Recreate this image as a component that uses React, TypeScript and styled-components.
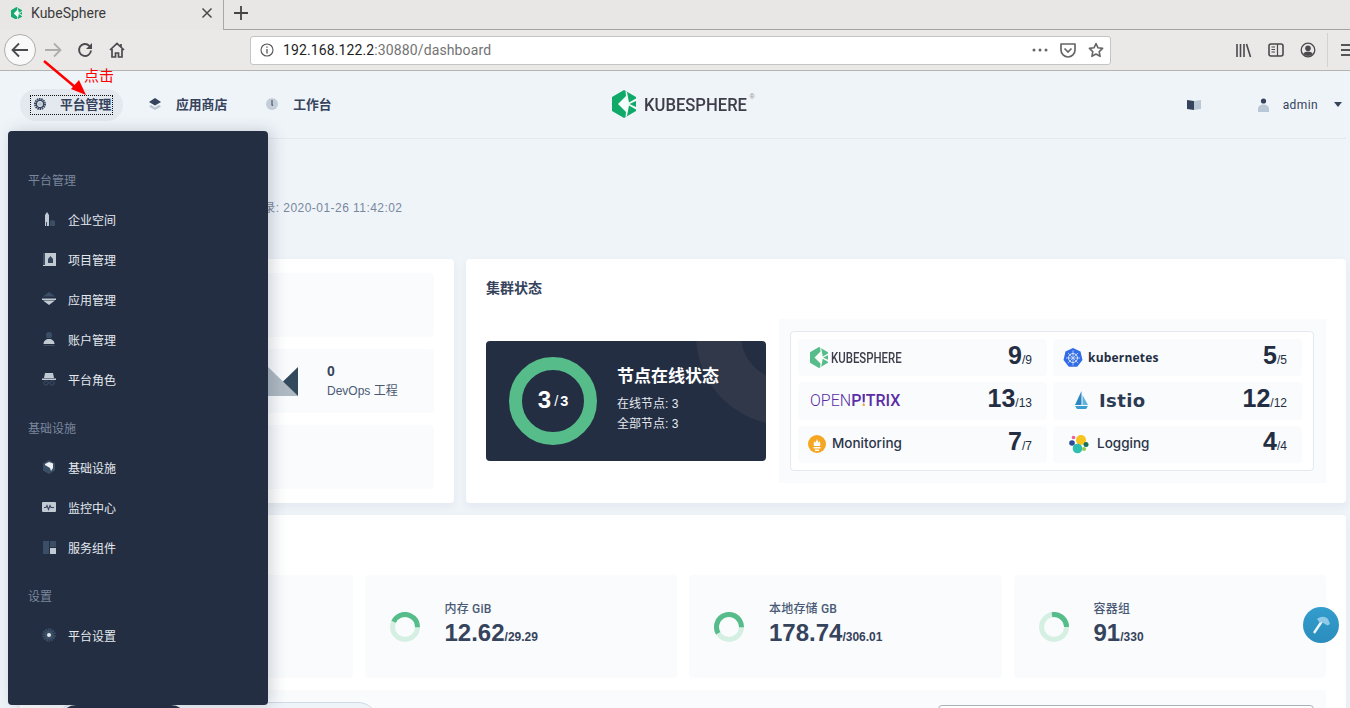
import styled, { createGlobalStyle } from 'styled-components';
import type { ReactNode } from 'react';

const SANS = '"Liberation Sans", "Noto Sans CJK SC", sans-serif';
const ROBOTO = 'Roboto, "Noto Sans CJK SC", sans-serif';

const GlobalStyle = createGlobalStyle`
    html, body {
        margin: 0;
        height: 708px;
        overflow: hidden;
        background: #eff4f9;
        font-family: ${SANS};
    }
`;

const Screen = styled.div`
    position: relative;
    width: 1350px;
    height: 708px;
    overflow: hidden;
    display: flex;
    flex-direction: column;
`;

/* browser chrome */
const TabBar = styled.div`
    height: 30px;
    flex: none;
    display: flex;
    background: #e8e7e5;
`;
const Tab = styled.div`
    width: 224px;
    display: flex;
    align-items: center;
    padding: 0 10px 4px 11px;
    box-sizing: border-box;
    border-right: 1px solid #a9a9a7;
    font: 14px ${ROBOTO};
    color: #3c3c3c;
    svg:first-child { margin-right: 9px; }
    span { flex: 1; }
`;
const TabRest = styled.div`
    flex: 1;
    display: flex;
    align-items: center;
    padding: 0 0 4px 9px;
    border-bottom: 1px solid #a2a2a0;
`;
const Toolbar = styled.div`
    height: 41px;
    flex: none;
    box-sizing: border-box;
    display: flex;
    align-items: center;
    background: #eae9e7;
    border-bottom: 1px solid #b4b4b2;
    & > * { flex: none; }
`;
const BackButton = styled.div`
    width: 32px;
    height: 32px;
    margin-left: 4px;
    box-sizing: border-box;
    border: 1px solid #adadab;
    border-radius: 50%;
    background: #f9f9f9;
    display: flex;
    align-items: center;
    justify-content: center;
`;
const NavIcons = styled.div`
    display: flex;
    align-items: center;
    gap: 16px;
    margin-left: 8px;
    width: 206px;
    svg:first-child { margin-right: -1px; }
`;
const UrlBar = styled.div`
    width: 861px;
    height: 29px;
    box-sizing: border-box;
    display: flex;
    align-items: center;
    gap: 9px;
    padding: 0 6px 0 9px;
    background: #fff;
    border: 1px solid #c4c4c2;
    border-radius: 3px;
    font: 14px ${ROBOTO};
    letter-spacing: 0.12px;
    color: #737373;
    b { font-weight: 400; color: #1f1f1f; }
`;
const UrlText = styled.div`
    flex: 1;
`;
const UrlIcons = styled.div`
    display: flex;
    align-items: center;
    gap: 12px;
`;
const ToolIcons = styled.div`
    display: flex;
    align-items: center;
    gap: 16px;
    margin-left: 125px;
`;
const ToolDivider = styled.div`
    width: 1px;
    height: 34px;
    margin-left: 11px;
    background: #d2d2d0;
`;
const Hamburger = styled.div`
    margin-left: 13px;
    display: flex;
    flex-direction: column;
    gap: 3px;
    i { display: block; width: 12px; height: 2px; background: #555; }
`;

/* page */
const Page = styled.div`
    flex: 1;
    min-height: 0;
    overflow: hidden;
    padding: 0 4px 0 20px;
    background: #eff4f9;
`;
const Header = styled.header`
    height: 68px;
    box-sizing: border-box;
    display: grid;
    grid-template-columns: 1fr auto 1fr;
    align-items: center;
    border-bottom: 1px solid #e3e9ef;
`;
const HeaderNav = styled.nav`
    display: flex;
    align-items: center;
    gap: 25px;
`;
const NavItem = styled.div<{ $active?: boolean; $offset?: number }>`
    height: 32px;
    box-sizing: border-box;
    display: flex;
    align-items: center;
    gap: 14px;
    margin-left: ${(p) => p.$offset ?? 0}px;
    padding-bottom: 2px;
    font: 700 12.8px ${SANS};
    color: #36435c;
    ${(p) => p.$active && `
        width: 103px;
        padding: 0 0 0 10px;
        border-radius: 16px;
        background: #e3e9ef;
    `}
`;
const FocusRing = styled.div`
    height: 20px;
    width: 83px;
    box-sizing: border-box;
    display: flex;
    align-items: center;
    gap: 13px;
    padding: 0 0 2px 2px;
    border: 1px dotted #111;
`;
const Logo = styled.div`
    display: flex;
    align-items: center;
    gap: 8px;
    margin-left: 1px;
`;
const LogoText = styled.span`
    font: 500 19px ${ROBOTO};
    color: #3e3d49;
    display: inline-block;
    width: 104px;
    white-space: nowrap;
    transform: scaleX(0.875);
    transform-origin: left center;
`;
const LogoMark = styled.sup`
    font: 7px ${SANS};
    color: #8c8c8c;
    align-self: flex-start;
    margin: 3px 0 0 -7px;
`;
const UserArea = styled.div`
    display: flex;
    justify-content: flex-end;
    align-items: center;
    padding-right: 4px;
`;
const BookIcon = styled.svg`
    margin-right: 57px;
`;
const UserName = styled.span`
    font: 12px ${ROBOTO};
    letter-spacing: 0.4px;
    color: #36435c;
    margin: 0 16px 0 14px;
`;
const Caret = styled.i`
    width: 0;
    height: 0;
    border: 4px solid transparent;
    border-top: 5px solid #36435c;
    border-bottom: 0;
`;
const Welcome = styled.div`
    height: 120px;
    box-sizing: border-box;
    padding: 62px 0 0 206px;
    font-size: 12px;
    line-height: 14px;
    letter-spacing: 0.45px;
    color: #79879c;
`;
const TopGrid = styled.div`
    display: grid;
    grid-template-columns: 434px 880px;
    gap: 12px;
`;
const Card = styled.section`
    background: #fff;
    border-radius: 4px;
    box-shadow: 0 4px 8px rgba(36, 46, 66, 0.06);
`;
const LeftCard = styled(Card)`
    height: 244px;
    box-sizing: border-box;
    padding: 14px 20px;
    display: flex;
    flex-direction: column;
    gap: 12px;
`;
const ResourceTile = styled.div`
    flex: 1;
    border-radius: 4px;
    background: #f9fbfd;
    display: flex;
    align-items: center;
    gap: 29px;
    padding-left: 198px;
`;
const ResourceCount = styled.div`
    font: 700 14px/20px ${SANS};
    color: #36435c;
`;
const ResourceLabel = styled.div`
    font: 12px/20px ${SANS};
    color: #4a5974;
`;
const RightCard = styled(Card)`
    height: 244px;
    box-sizing: border-box;
    padding: 20px;
`;
const CardTitle = styled.h3`
    margin: 0 0 22px;
    font: 700 14px/18px ${SANS};
    color: #36435c;
`;
const ClusterBody = styled.div`
    display: flex;
    align-items: center;
    gap: 13px;
`;
const NodeCard = styled.div`
    position: relative;
    overflow: hidden;
    width: 280px;
    height: 120px;
    flex: none;
    box-sizing: border-box;
    padding-left: 23px;
    display: flex;
    align-items: center;
    gap: 20px;
    border-radius: 4px;
    background: #242e42;
    color: #fff;
    &::before {
        content: '';
        position: absolute;
        right: -110px;
        top: -96px;
        width: 180px;
        height: 180px;
        box-sizing: border-box;
        border: 45px solid #303849;
        border-radius: 50%;
    }
`;
const Donut = styled.div`
    position: relative;
    z-index: 1;
    width: 88px;
    height: 88px;
    box-sizing: border-box;
    padding-bottom: 3px;
    border: 13px solid #55bc8a;
    border-radius: 50%;
    display: flex;
    align-items: center;
    justify-content: center;
    font: 700 24px ${SANS};
    small { font: 700 14.5px ${SANS}; margin: 2px 0 0 3px; }
    small i { font-weight: 400; font-style: normal; margin-right: 2px; }
`;
const NodeInfo = styled.div`
    position: relative;
    z-index: 1;
    margin-top: -3px;
    font: 12px/20px ${SANS};
    color: #e3e9ef;
    h4 {
        margin: 0 0 5px;
        font: 700 17px/24px ${SANS};
        color: #fff;
    }
`;
const SystemBlock = styled.div`
    flex: 1;
    height: 164px;
    box-sizing: border-box;
    padding: 12px 12px 12px 11px;
    background: #f9fbfd;
`;
const SystemBox = styled.div`
    height: 140px;
    box-sizing: border-box;
    padding: 7px 11px 7px 7px;
    display: grid;
    grid-template-columns: 249px 249px;
    grid-template-rows: repeat(3, 1fr);
    gap: 6px;
    background: #fff;
    border: 1px solid #e3e9ef;
    border-radius: 4px;
`;
const SystemTile = styled.div`
    display: flex;
    align-items: center;
    justify-content: space-between;
    padding: 0 15px 0 10px;
    background: #f9fbfd;
    border-radius: 4px;
`;
const SystemName = styled.div<{ $pad?: number }>`
    display: flex;
    align-items: center;
    padding-left: ${(p) => p.$pad ?? 0}px;
`;
const Count = styled.div`
    margin-top: -6px;
    font: 700 25px/30px ${SANS};
    color: #242e42;
    small { font: 12px ${SANS}; }
`;
const KsWord = styled.span`
    margin-left: 3px;
    font: 500 14px ${ROBOTO};
    color: #3e3d49;
    display: inline-block;
    width: 71px;
    white-space: nowrap;
    transform: scaleX(0.815);
    transform-origin: left center;
`;
const PitrixWord = styled.span`
    font: 300 16px ${ROBOTO};
    color: #5b2ea6;
    b { font-weight: 500; }
    em {
        font-style: normal;
        font-weight: 700;
        color: transparent;
        background: linear-gradient(#5b2ea6 68%, #f5a623 68%);
        -webkit-background-clip: text;
        background-clip: text;
    }
`;
const K8sWord = styled.span`
    margin-left: 5px;
    font: 700 12px "Open Sans", ${ROBOTO};
    letter-spacing: 0.2px;
    color: #242e42;
`;
const IstioWord = styled.span`
    margin-left: 11px;
    font: 700 18px "DejaVu Sans", sans-serif;
    letter-spacing: 0.4px;
    color: #2c3a52;
`;
const PlainWord = styled.span<{ $gap?: number }>`
    margin-left: ${(p) => p.$gap ?? 6}px;
    padding-bottom: 2px;
    font: 500 13.5px Inter, ${ROBOTO};
    color: #2b3548;
`;
const UsageCard = styled(Card)`
    margin-top: 12px;
    height: 400px;
    box-sizing: border-box;
    padding: 60px 20px 20px;
`;
const UsageGrid = styled.div`
    display: grid;
    grid-template-columns: repeat(4, 1fr);
    gap: 12px;
`;
const UsageTile = styled.div`
    height: 103px;
    box-sizing: border-box;
    display: flex;
    align-items: center;
    gap: 25px;
    padding-left: 25px;
    border-radius: 4px;
    background: #f9fbfd;
`;
const UsageText = styled.div`
    margin-bottom: 5px;
`;
const UsageLabel = styled.div`
    font: 500 12px/16px ${ROBOTO};
    letter-spacing: 0.2px;
    color: #4a5974;
    margin-bottom: 2px;
`;
const UsageValue = styled.div`
    font: 700 24px/28px ${SANS};
    color: #36435c;
    small { font: 700 12px ${SANS}; }
`;
const ChartSection = styled.div`
    margin-top: 12px;
    height: 100px;
    padding: 12px 12px 0 17px;
    display: flex;
    justify-content: space-between;
    align-items: flex-start;
    background: #f9fbfd;
`;
const RangePill = styled.div`
    width: 321px;
    height: 40px;
    box-sizing: border-box;
    padding: 2px;
    background: #eff4f9;
    border: 1px solid #d1d9e3;
    border-radius: 20px;
`;
const RangeActive = styled.div`
    width: 127px;
    height: 32px;
    border-radius: 16px;
    background: #242e42;
`;
const SearchBox = styled.div`
    width: 376px;
    height: 32px;
    margin-top: 3px;
    box-sizing: border-box;
    background: #fff;
    border: 1px solid #a9b0ba;
    border-radius: 4px;
`;

/* overlays */
const SideMenu = styled.aside`
    position: absolute;
    left: 8px;
    top: 131px;
    width: 260px;
    height: 574px;
    box-sizing: border-box;
    padding: 39px 0 0 20px;
    border-radius: 4px;
    background: #242e42;
    box-shadow: 4px 0 16px rgba(36, 46, 66, 0.2);
`;
const MenuGroup = styled.div`
    margin-bottom: 18px;
`;
const MenuTitle = styled.div`
    font: 12px/22px ${SANS};
    color: #79879c;
    margin-bottom: 8px;
`;
const MenuItem = styled.div`
    height: 40px;
    box-sizing: border-box;
    display: flex;
    align-items: center;
    gap: 11px;
    padding: 0 0 2px 13px;
    font: 12px ${SANS};
    color: #e3e9ef;
`;
const Annotation = styled.svg`
    position: absolute;
    left: 0;
    top: 0;
    pointer-events: none;
`;
const ClickNote = styled.div`
    position: absolute;
    left: 84px;
    top: 67px;
    font: 15px/18px ${SANS};
    color: #f00;
`;
const HammerButton = styled.div`
    position: absolute;
    left: 1303px;
    top: 607px;
    width: 36px;
    height: 36px;
    border-radius: 50%;
    background: linear-gradient(180deg, #329dce 0%, #2b8dbd 100%);
    display: flex;
    align-items: center;
    justify-content: center;
`;

const L = '#c1c9d3';
const D = '#3a4f66';

const menuIcons: Record<string, ReactNode> = {
    building: <><path d="M4 15V4l2-3 2 3v11z" fill={L} /><path d="M6 15h-.8v-4H6z" fill="#242e42" /><path d="M9 15v-5l2.500-1L14 10v5z" fill={D} /></>,
    project: <><path d="M2 2h3v12H2z" fill={D} /><path d="M4 2h11v13H2v-1h2z" fill={L} /><path d="M7 12V8l2.500-3L12 8v4z" fill="#36435c" /></>,
    app: <><path d="M8 1l6 4.500H2z" fill={D} /><path d="M1 7.500h14V9H1z" fill={L} /><path d="M2 9.500h12L8 14z" fill={L} /></>,
    user: <><circle cx="8" cy="4" r="3" fill={D} /><path d="M8 2c1.500 0 2.500 1 2.500 3v2h-5V5C5.500 3 6.500 2 8 2z" fill={D} /><path d="M2.500 13c0-3 2.500-5 5.500-5s5.500 2 5.500 5z" fill={L} /><path d="M2.500 14h11v1h-11z" fill={D} /></>,
    role: <><path d="M4 2h8l1 5H3z" fill={L} /><path d="M1 7.500h14V9H1z" fill={L} /><circle cx="5" cy="12" r="2.200" fill="none" stroke={D} strokeWidth="1" /><circle cx="11" cy="12" r="2.200" fill="none" stroke={D} strokeWidth="1" /></>,
    infra: <><path d="M8 1l6 3.500v7L8 15l-6-3.500v-7z" fill={D} /><path d="M4 5l4-2 4 1.500V9l-2 3-1-3-5-3z" fill="#eef1f4" /></>,
    monitor: <><rect x="1" y="3" width="14" height="10" rx="1" fill={L} /><path d="M3 8.500h2l1-2 1.500 4L9 6.500l1 2h3" fill="none" stroke="#36435c" strokeWidth="1.100" /></>,
    service: <><path d="M2 2h6v13H2z" fill={D} /><path d="M9 2h6v6H9z" fill={D} /><path d="M9 9h6v6H9z" fill={L} /></>,
    settings: <><circle cx="8" cy="8" r="5.500" fill="none" stroke={D} strokeWidth="2.500" strokeDasharray="1.600 0.800" /><circle cx="8" cy="8" r="4.500" fill={D} /><circle cx="8" cy="8" r="2" fill="#e3e9ef" /></>,
};

const menu = [
    { title: '平台管理', items: [['building', '企业空间'], ['project', '项目管理'], ['app', '应用管理'], ['user', '账户管理'], ['role', '平台角色']] },
    { title: '基础设施', items: [['infra', '基础设施'], ['monitor', '监控中心'], ['service', '服务组件']] },
    { title: '设置', items: [['settings', '平台设置']] },
];

const usage = [
    { label: 'CPU 核', value: 6.51, total: '24' },
    { label: '内存 GiB', value: 12.62, total: '29.29' },
    { label: '本地存储 GB', value: 178.74, total: '306.01' },
    { label: '容器组', value: 91, total: '330' },
];

const KsHex = ({ size, color }: { size: number; color: string }) => (
    <svg width={size} height={size * 1.17} viewBox="0 0 24 28">
        <path d="M12 0l12 7v14l-12 7-12-7V7z" fill={color} />
        <path d="M24 8.500L17 12.500 15 2l-1.500-1L14 6 6 14l8 8-.5 5 1.500-1 2-10.500 7 4V17l-6.500-3L24 11z" fill="#fff" opacity="0.96" />
    </svg>
);

const UsageRing = ({ ratio }: { ratio: number }) => {
    const r = 12.5;
    const len = 2 * Math.PI * r;
    // the arc always ends at three o'clock
    const start = -ratio * 360;
    return (
        <svg width="30" height="30" viewBox="0 0 30 30" style={{ flex: 'none' }}>
            <circle cx="15" cy="15" r={r} fill="none" stroke="#d5f0e3" strokeWidth="5" />
            <circle
                cx="15"
                cy="15"
                r={r}
                fill="none"
                stroke="#55bc8a"
                strokeWidth="5"
                strokeDasharray={`${ratio * len} ${len}`}
                transform={`rotate(${start} 15 15)`}
            />
        </svg>
    );
};

const App = () => {
    return (
        <Screen>
            <GlobalStyle />
            <TabBar>
                <Tab>
                    <KsHex size={11} color="#16a970" />
                    <span>KubeSphere</span>
                    <svg width="12" height="12" viewBox="0 0 12 12">
                        <path d="M1.500 1.500l9 9M10.500 1.500l-9 9" stroke="#4a4a4a" strokeWidth="1.500" />
                    </svg>
                </Tab>
                <TabRest>
                    <svg width="16" height="16" viewBox="0 0 16 16">
                        <path d="M8 1v14M1 8h14" stroke="#444" strokeWidth="1.800" />
                    </svg>
                </TabRest>
            </TabBar>
            <Toolbar>
                <BackButton>
                    <svg width="18" height="16" viewBox="0 0 18 16">
                        <path d="M8 1.500L1.500 8 8 14.500M2 8h15" fill="none" stroke="#4a4a4f" strokeWidth="1.800" />
                    </svg>
                </BackButton>
                <NavIcons>
                    <svg width="18" height="16" viewBox="0 0 18 16">
                        <path d="M10 1.500L16.500 8 10 14.500M16 8H1" fill="none" stroke="#adadab" strokeWidth="1.800" />
                    </svg>
                    <svg width="16" height="16" viewBox="0 0 16 16">
                        <path d="M14 8.500a6 6 0 1 1-1.700-4.700L14.500 6" fill="none" stroke="#4a4a4f" strokeWidth="1.900" />
                        <path d="M15 1v6H9z" fill="#4a4a4f" />
                    </svg>
                    <svg width="16" height="16" viewBox="0 0 16 16">
                        <path d="M1 8l7-6.500L15 8M3 7v8h3.500v-4h3v4H13V7M12 2v3" fill="none" stroke="#4a4a4f" strokeWidth="1.700" />
                    </svg>
                </NavIcons>
                <UrlBar>
                    <svg width="14" height="14" viewBox="0 0 14 14">
                        <circle cx="7" cy="7" r="6" fill="none" stroke="#555" strokeWidth="1.100" />
                        <path d="M7 6v4.500M7 3.500v1.300" stroke="#555" strokeWidth="1.300" />
                    </svg>
                    <UrlText><b>192.168.122.2</b>:30880/dashboard</UrlText>
                    <UrlIcons>
                        <svg width="16" height="4" viewBox="0 0 16 4">
                            <circle cx="2" cy="2" r="1.500" fill="#666" />
                            <circle cx="8" cy="2" r="1.500" fill="#666" />
                            <circle cx="14" cy="2" r="1.500" fill="#666" />
                        </svg>
                        <svg width="16" height="15" viewBox="0 0 16 15">
                            <path d="M1 1h14v6a7 7 0 0 1-14 0z" fill="none" stroke="#666" strokeWidth="1.700" strokeLinejoin="round" />
                            <path d="M4.500 5.500L8 9l3.500-3.500" fill="none" stroke="#666" strokeWidth="1.700" />
                        </svg>
                        <svg width="16" height="16" viewBox="0 0 16 16">
                            <path d="M8 1.500l2 4.300 4.600.6-3.400 3.200.9 4.700L8 12l-4.100 2.300.9-4.700L1.400 6.400 6 5.800z" fill="none" stroke="#666" strokeWidth="1.600" strokeLinejoin="round" />
                        </svg>
                    </UrlIcons>
                </UrlBar>
                <ToolIcons>
                    <svg width="16" height="15" viewBox="0 0 16 15">
                        <path d="M1 1v13M4.500 1v13M8 1v13M10.500 1l4 13" stroke="#4a4a4f" strokeWidth="1.600" />
                    </svg>
                    <svg width="16" height="14" viewBox="0 0 16 14">
                        <rect x="1" y="1" width="14" height="12" rx="2" fill="none" stroke="#4a4a4f" strokeWidth="1.600" />
                        <path d="M9.500 1v12M3.500 4h3.500M3.500 6.500h3.500M3.500 9h3.500" stroke="#4a4a4f" strokeWidth="1.200" />
                    </svg>
                    <svg width="16" height="16" viewBox="0 0 16 16">
                        <circle cx="8" cy="8" r="6.800" fill="none" stroke="#4a4a4f" strokeWidth="1.300" />
                        <circle cx="8" cy="6.200" r="2.800" fill="#4a4a4f" />
                        <path d="M3.200 12c1-2 3-2.600 4.800-2.600s3.800.6 4.800 2.600A6.800 6.800 0 0 1 3.200 12z" fill="#4a4a4f" />
                    </svg>
                </ToolIcons>
                <ToolDivider />
                <Hamburger><i /><i /><i /></Hamburger>
            </Toolbar>
            <Page>
                <Header>
                    <HeaderNav>
                        <NavItem $active>
                            <FocusRing>
                                <svg width="14" height="14" viewBox="0 0 14 14">
                                    <circle cx="7" cy="7" r="5" fill="none" stroke="#36435c" strokeWidth="2" strokeDasharray="1.500 0.700" />
                                    <circle cx="7" cy="7" r="3.600" fill="none" stroke="#36435c" strokeWidth="1.400" />
                                    <circle cx="7" cy="7" r="2" fill="#b9c4d0" />
                                </svg>
                                平台管理
                            </FocusRing>
                        </NavItem>
                        <NavItem>
                            <svg width="14" height="14" viewBox="0 0 14 14">
                                <path d="M7 1l6 4-6 3.500L1 5z" fill="#36435c" />
                                <path d="M3 8l4 2.500L11 8l2 1.500L7 13 1 9.500z" fill="#b9c4d0" />
                            </svg>
                            应用商店
                        </NavItem>
                        <NavItem $offset={13}>
                            <svg width="14" height="14" viewBox="0 0 14 14">
                                <circle cx="7" cy="7" r="6" fill="#c4cdd8" />
                                <path d="M6.500 3h1v4.500l.8.800-1.300.8-.5-1z" fill="#36435c" />
                            </svg>
                            工作台
                        </NavItem>
                    </HeaderNav>
                    <Logo>
                        <KsHex size={24} color="#0fa968" />
                        <LogoText>KUBESPHERE</LogoText>
                        <LogoMark>®</LogoMark>
                    </Logo>
                    <UserArea>
                        <BookIcon width="14" height="11" viewBox="0 0 14 11">
                            <path d="M0 1l7 1v9l-7-1z" fill="#36435c" />
                            <path d="M7 2l7-1v9l-7 1z" fill="#b9c7d6" />
                        </BookIcon>
                        <svg width="11" height="14" viewBox="0 0 11 14">
                            <circle cx="5.500" cy="3" r="2.600" fill="#36435c" />
                            <path d="M0 14v-3c0-3 2.500-4.500 5.500-4.500S11 8 11 11v3z" fill="#b9c7d6" />
                        </svg>
                        <UserName>admin</UserName>
                        <Caret />
                    </UserArea>
                </Header>
                <Welcome>最近登录: 2020-01-26 11:42:02</Welcome>
                <TopGrid>
                    <LeftCard>
                        <ResourceTile />
                        <ResourceTile>
                            <svg width="60" height="29" viewBox="0 0 60 29">
                                <path d="M0 29L30 0l30 29z" fill="#aeb9c3" />
                                <path d="M60 0L45 14.500 60 29z" fill="#33495c" />
                            </svg>
                            <div>
                                <ResourceCount>0</ResourceCount>
                                <ResourceLabel>DevOps 工程</ResourceLabel>
                            </div>
                        </ResourceTile>
                        <ResourceTile />
                    </LeftCard>
                    <RightCard>
                        <CardTitle>集群状态</CardTitle>
                        <ClusterBody>
                            <NodeCard>
                                <Donut>3<small><i>/</i>3</small></Donut>
                                <NodeInfo>
                                    <h4>节点在线状态</h4>
                                    <div>在线节点: 3</div>
                                    <div>全部节点: 3</div>
                                </NodeInfo>
                            </NodeCard>
                            <SystemBlock>
                                <SystemBox>
                                    <SystemTile>
                                        <SystemName $pad={2}>
                                            <KsHex size={18} color="#55bc8a" />
                                            <KsWord>KUBESPHERE</KsWord>
                                        </SystemName>
                                        <Count>9<small>/9</small></Count>
                                    </SystemTile>
                                    <SystemTile>
                                        <SystemName>
                                            <svg width="20" height="20" viewBox="0 0 20 20">
                                                <path d="M10 0l7.500 3.600L19.500 12l-5.300 6.800H5.800L.5 12l2-8.400z" fill="#326de6" />
                                                <circle cx="10" cy="10" r="4.500" fill="none" stroke="#dfe8fb" strokeWidth="1" />
                                                <path d="M10 2.500v15M3 10h14M5 5l10 10M15 5L5 15" stroke="#dfe8fb" strokeWidth="0.700" />
                                            </svg>
                                            <K8sWord>kubernetes</K8sWord>
                                        </SystemName>
                                        <Count>5<small>/5</small></Count>
                                    </SystemTile>
                                    <SystemTile>
                                        <SystemName $pad={2}>
                                            <PitrixWord>OPEN<b>P</b><em>!</em><b>TRIX</b></PitrixWord>
                                        </SystemName>
                                        <Count>13<small>/13</small></Count>
                                    </SystemTile>
                                    <SystemTile>
                                        <SystemName $pad={12}>
                                            <svg width="13" height="19" viewBox="0 0 13 19">
                                                <path d="M6.500 0v14H0z" fill="#2c87c1" />
                                                <path d="M7.500 4L13 14H7.500z" fill="#5eb5dc" />
                                                <path d="M0 15h13l-2 3H2z" fill="#3a9cd0" />
                                            </svg>
                                            <IstioWord>Istio</IstioWord>
                                        </SystemName>
                                        <Count>12<small>/12</small></Count>
                                    </SystemTile>
                                    <SystemTile>
                                        <SystemName>
                                            <svg width="18" height="18" viewBox="0 0 18 18">
                                                <circle cx="9" cy="9" r="9" fill="#f5a623" />
                                                <path d="M6 11c-1-2 0-4 1-5l.5 2 1.500-4 1.500 4 .5-2c1 1 2 3 1 5z" fill="#fff" />
                                                <path d="M5.500 12h7v1.500h-7zM7 14.500h4V16H7z" fill="#fff" />
                                            </svg>
                                            <PlainWord>Monitoring</PlainWord>
                                        </SystemName>
                                        <Count>7<small>/7</small></Count>
                                    </SystemTile>
                                    <SystemTile>
                                        <SystemName $pad={6}>
                                            <svg width="20" height="20" viewBox="0 0 20 20">
                                                <circle cx="12" cy="6" r="5" fill="#f7c31c" />
                                                <circle cx="8.500" cy="14.500" r="4.800" fill="#2ebfb0" />
                                                <circle cx="17" cy="10.500" r="2.500" fill="#17705a" />
                                                <circle cx="15" cy="15" r="2" fill="#92cc4e" />
                                                <circle cx="3" cy="9" r="2.800" fill="#2e4c9a" />
                                                <circle cx="4.500" cy="3.500" r="1.800" fill="#ec5f96" />
                                            </svg>
                                            <PlainWord $gap={8}>Logging</PlainWord>
                                        </SystemName>
                                        <Count>4<small>/4</small></Count>
                                    </SystemTile>
                                </SystemBox>
                            </SystemBlock>
                        </ClusterBody>
                    </RightCard>
                </TopGrid>
                <UsageCard>
                    <UsageGrid>
                        {usage.map((item) => (
                            <UsageTile key={item.label}>
                                <UsageRing ratio={item.value / parseFloat(item.total)} />
                                <UsageText>
                                    <UsageLabel>{item.label}</UsageLabel>
                                    <UsageValue>{item.value}<small>/{item.total}</small></UsageValue>
                                </UsageText>
                            </UsageTile>
                        ))}
                    </UsageGrid>
                    <ChartSection>
                        <RangePill><RangeActive /></RangePill>
                        <SearchBox />
                    </ChartSection>
                </UsageCard>
            </Page>

            <SideMenu>
                {menu.map((group) => (
                    <MenuGroup key={group.title}>
                        <MenuTitle>{group.title}</MenuTitle>
                        {group.items.map(([icon, label]) => (
                            <MenuItem key={label}>
                                <svg width="16" height="16" viewBox="0 0 16 16">{menuIcons[icon]}</svg>
                                {label}
                            </MenuItem>
                        ))}
                    </MenuGroup>
                ))}
            </SideMenu>

            <HammerButton>
                <svg width="22" height="22" viewBox="0 0 22 22">
                    <path d="M4 19L12 7" stroke="#eef6fb" strokeWidth="2.400" />
                    <path d="M7 5c4-3 8-3 11 0l2 5-2.500 1.500-6-3.500-1.500 1z" fill="#8fcbe6" />
                </svg>
            </HammerButton>
            <ClickNote>点击</ClickNote>
            <Annotation width="120" height="110" viewBox="0 0 120 110">
                <path d="M44 61L75 87" stroke="#f00" strokeWidth="2.500" />
                <path d="M86 95L71 89L79 80z" fill="#f00" />
            </Annotation>
        </Screen>
    );
};

export default App;
